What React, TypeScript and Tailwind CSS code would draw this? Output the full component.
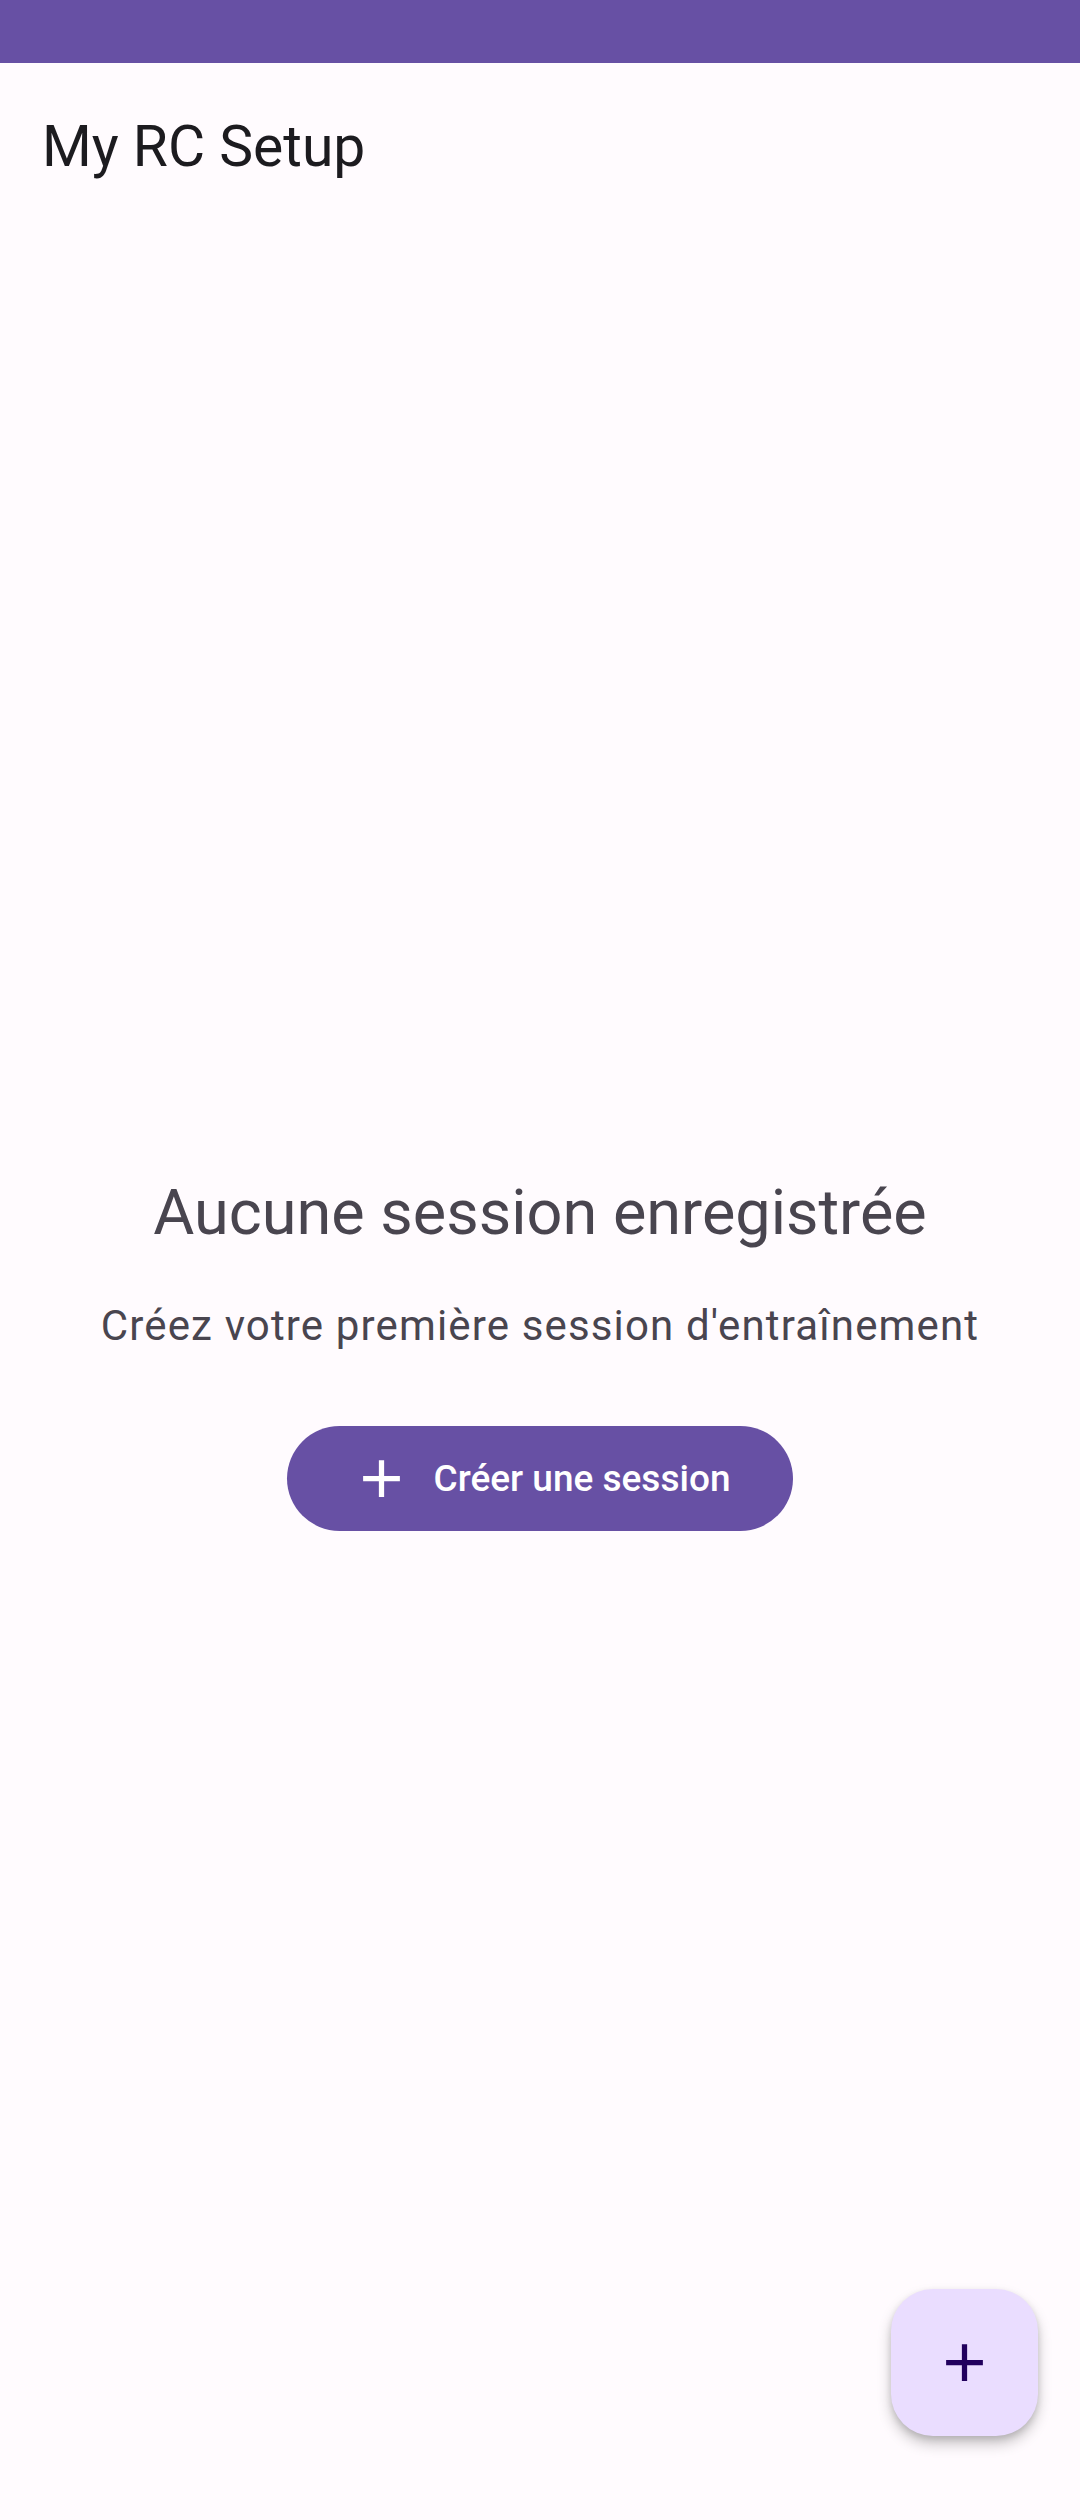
function AddIcon({ className }: { className?: string }) {
  return (
    <svg viewBox="0 0 24 24" className={className} fill="currentColor">
      <path d="M19 13h-6v6h-2v-6H5v-2h6V5h2v6h6v2z" />
    </svg>
  )
}

export default function App() {
  return (
    <div className="relative w-[1080px] h-[2520px] flex flex-col bg-[#FFFBFE] font-['Roboto',sans-serif] overflow-hidden">
      <div className="h-[63px] bg-[#6750A4] shrink-0" />

      <header className="h-[168px] shrink-0 flex items-center px-[42px]">
        <h1 className="text-[57px] leading-[76px] text-[#1C1B1F]">My RC Setup</h1>
      </header>

      <main className="flex-1 flex flex-col items-center justify-center pb-[49px]">
        <h2 className="text-[63px] leading-[84px] text-[#49454F]">Aucune session enregistrée</h2>
        <p className="mt-[39px] text-[42px] leading-[63px] tracking-[1.15px] text-[#49454F]">
          Créez votre première session d'entraînement
        </p>
        <button className="mt-[69px] h-[105px] flex items-center gap-[21px] pl-[63px] pr-[63px] rounded-full bg-[#6750A4] text-white">
          <AddIcon className="w-[63px] h-[63px]" />
          <span className="text-[37px] font-medium">Créer une session</span>
        </button>
      </main>

      <button className="absolute right-[42px] bottom-[84px] w-[147px] h-[147px] rounded-[42px] bg-[#EADDFF] flex items-center justify-center shadow-[0_8px_14px_rgba(0,0,0,0.22),0_3px_6px_rgba(0,0,0,0.12)]">
        <AddIcon className="w-[63px] h-[63px] text-[#21005D]" />
      </button>
    </div>
  )
}
